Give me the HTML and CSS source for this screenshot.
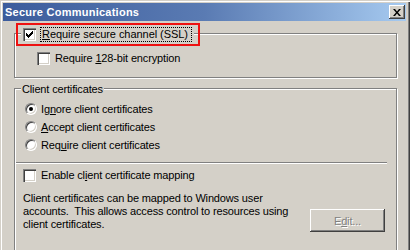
FILE: index.html
```html
<!DOCTYPE html>
<html lang="en">
<head>
  <meta charset="UTF-8" />
  <title>Secure Communications</title>
  <link rel="stylesheet" href="styles.css">
</head>
<body>

  <div class="window">
    <div class="titlebar">
      <span class="title">Secure Communications</span>
      <span class="close-btn">
        <svg width="8" height="7" viewBox="0 0 8 7"><path d="M0 0h2l2 2.5 2-2.5h2l-3 3.5 3 3.5h-2l-2-2.5-2 2.5h-2l3-3.5z" fill="#000"/></svg>
      </span>
    </div>

    <div class="content">
      <div class="group group-ssl">
        <div class="legend legend-check">
          <span class="checkbox">
            <svg width="7" height="7" viewBox="0 0 7 7"><path d="M0 2h1v1h1v1h1v-1h1v-1h1v-1h1v-1h1v3h-1v1h-1v1h-1v1h-1v1h-1v-1h-1v-1h-1z" fill="#000"/></svg>
          </span>
          <span class="focus"><u>R</u>equire secure channel (SSL)</span>
        </div>
        <div class="row row-128">
          <span class="checkbox"></span>
          <span>Require <u>1</u>28-bit encryption</span>
        </div>
      </div>

      <div class="group group-client">
        <div class="legend legend-text">Client certificates</div>
        <div class="radio-list">
          <div class="row radio-row">
            <span class="radio checked"></span>
            <span>Ig<u>n</u>ore client certificates</span>
          </div>
          <div class="row radio-row">
            <span class="radio"></span>
            <span><u>A</u>ccept client certificates</span>
          </div>
          <div class="row radio-row">
            <span class="radio"></span>
            <span>Req<u>u</u>ire client certificates</span>
          </div>
        </div>
        <div class="separator"></div>
        <div class="row row-mapping">
          <span class="checkbox"></span>
          <span>Enable cl<u>i</u>ent certificate mapping</span>
        </div>
        <div class="mapping">
          <p class="mapping-text">Client certificates can be mapped to Windows user<br>accounts.&nbsp; This allows access control to resources using<br>client certificates.</p>
          <span class="btn disabled">E<u>d</u>it...</span>
        </div>
      </div>
    </div>

    <div class="highlight"></div>
  </div>

</body>
</html>
```

FILE: styles.css
```css
body {
  margin: 0;
  background: #d4d0c8;
  font-family: "Liberation Sans", Arial, sans-serif;
  font-size: 11px;
  letter-spacing: -0.15px;
  color: #000;
  overflow: hidden;
}
.window {
  position: relative;
  width: 410px;
  height: 250px;
  box-sizing: border-box;
  padding: 3px 4px 0 3px;
  box-shadow: inset 1px 1px #d4d0c8, inset 2px 2px #fff, inset -1px 0 #404040, inset -2px 0 #808080;
  overflow: hidden;
}
.titlebar {
  height: 18px;
  display: flex;
  align-items: center;
  justify-content: space-between;
  padding: 0 1px 0 2px;
  background: linear-gradient(to right, #3c5c9c 0%, #5a7bb3 50%, #a6caf0 100%);
}
.title {
  color: #fff;
  font-weight: bold;
  font-size: 11px;
  letter-spacing: 0.25px;
}
.close-btn {
  width: 16px;
  height: 14px;
  box-sizing: border-box;
  display: flex;
  align-items: center;
  justify-content: center;
  background: #d4d0c8;
  box-shadow: inset -1px -1px #404040, inset 1px 1px #fff, inset -2px -2px #808080;
}
.content {
  padding: 12px 9px 0 11px;
}
.group {
  border: 1px solid #808080;
  box-shadow: inset 1px 1px #fff, 1px 1px #fff;
}
.group-ssl { height: 45px; box-sizing: border-box; }
.group-client { margin-top: 10px; height: 200px; }

.legend {
  display: flex;
  align-items: center;
  width: max-content;
  background: #d4d0c8;
  line-height: 13px;
}
.legend-check {
  margin: -7px 0 0 6px;
  padding: 0 2px;
  height: 15px;
}
.legend-check .checkbox { margin-right: 4px; }
.focus {
  outline: 1px dotted #000;
  outline-offset: -1px;
  padding: 1px 4px 1px 2px;
  line-height: 13px;
  letter-spacing: -0.05px;
}
.legend-text {
  margin: -6px 0 0 6px;
  padding: 0 1px;
}

.row {
  display: flex;
  align-items: center;
  height: 13px;
  line-height: 13px;
}
.row-128 { margin: 10px 0 0 22px; gap: 5px; }

.checkbox {
  width: 13px;
  height: 13px;
  box-sizing: border-box;
  flex: none;
  display: flex;
  align-items: center;
  justify-content: center;
  background: #fff;
  box-shadow: inset 1px 1px #808080, inset 2px 2px #404040, inset -1px -1px #fff, inset -2px -2px #d4d0c8;
}

.radio-list { margin-top: 4px; }
.radio-row { height: 18px; margin-left: 10px; gap: 4px; }
.radio {
  width: 12px;
  height: 12px;
  flex: none;
  box-sizing: border-box;
  border-radius: 50%;
  background: #fff;
  border: 1px solid;
  border-color: #808080 #fff #fff #808080;
  box-shadow: inset 1px 1px #404040, inset -1px -1px #d4d0c8;
  display: flex;
  align-items: center;
  justify-content: center;
}
.radio.checked::after {
  content: "";
  width: 4px;
  height: 4px;
  border-radius: 50%;
  background: #000;
}

.separator {
  margin: 8px 0 0 1px;
  width: 371px;
  height: 1px;
  background: #808080;
  border-bottom: 1px solid #fff;
}
.row-mapping { margin: 5px 0 0 8px; gap: 5px; }

.mapping {
  display: flex;
  align-items: flex-start;
  padding: 0 11px 0 8px;
}
.mapping-text {
  margin: 10px 0 0;
  line-height: 13px;
}
.btn {
  margin: 27px 0 0 auto;
  width: 75px;
  height: 23px;
  box-sizing: border-box;
  display: flex;
  align-items: center;
  justify-content: center;
  background: #d4d0c8;
  box-shadow: inset -1px -1px #404040, inset 1px 1px #fff, inset -2px -2px #808080;
}
.btn.disabled {
  color: #808080;
  text-shadow: 1px 1px #fff;
}

.highlight {
  position: absolute;
  left: 16px;
  top: 23px;
  width: 184px;
  height: 23px;
  box-sizing: border-box;
  border: 2px solid #ee1111;
}
```
